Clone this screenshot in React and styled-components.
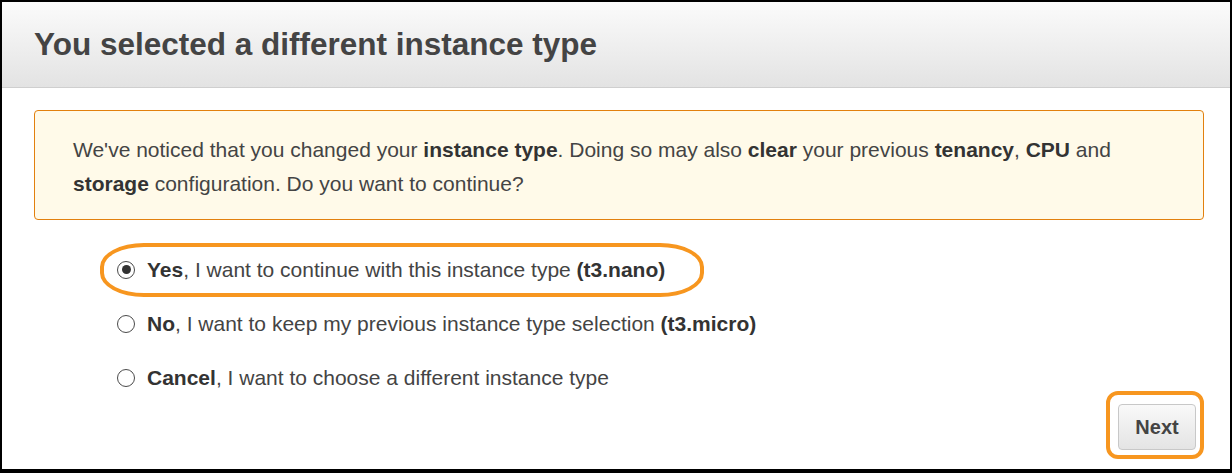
import React from "react";
import styled, { createGlobalStyle } from "styled-components";

const GlobalStyle = createGlobalStyle`
	html, body {
		margin: 0;
		padding: 0;
		background: #000;
	}
	body {
		font-family: "Liberation Sans", Arial, sans-serif;
		color: #444;
	}
`;

const options = [
	{ id: "yes", lead: "Yes", text: ", I want to continue with this instance type ", tail: "(t3.nano)", checked: true },
	{ id: "no", lead: "No", text: ", I want to keep my previous instance type selection ", tail: "(t3.micro)" },
	{ id: "cancel", lead: "Cancel", text: ", I want to choose a different instance type" },
];

function App() {
	return (
		<>
			<GlobalStyle />
			<Frame>
				<Header>
					<Title>You selected a different instance type</Title>
				</Header>
				<Body>
					<Alert>
						We've noticed that you changed your <b>instance type</b>. Doing so may also <b>clear</b> your
						previous <b>tenancy</b>, <b>CPU</b> and <b>storage</b> configuration. Do you want to continue?
					</Alert>
					<Options>
						{options.map((o) => (
							<Option key={o.id} $highlighted={o.checked}>
								<Radio $checked={o.checked} />
								<span>
									<b>{o.lead}</b>
									{o.text}
									{o.tail && <b>{o.tail}</b>}
								</span>
							</Option>
						))}
					</Options>
					<Footer>
						<NextWrap>
							<NextButton>Next</NextButton>
						</NextWrap>
					</Footer>
				</Body>
			</Frame>
		</>
	);
}

export default App;

const Frame = styled.div`
	box-sizing: border-box;
	width: 1232px;
	height: 473px;
	border: 2px solid #000;
	border-bottom-width: 4px;
	background: #fff;
	display: flex;
	flex-direction: column;
	overflow: hidden;
`;

const Header = styled.div`
	height: 85px;
	border-bottom: 1px solid #cfcfcf;
	background: linear-gradient(to bottom, #fbfbfb, #e3e3e3);
	display: flex;
	align-items: center;
	padding-left: 32px;
`;

const Title = styled.h1`
	margin: 0;
	font-size: 31.5px;
	font-weight: bold;
	color: #444;
`;

const Body = styled.div`
	flex: 1;
	padding: 22px 26px 0 32px;
	display: flex;
	flex-direction: column;
`;

const Alert = styled.div`
	box-sizing: border-box;
	height: 110px;
	border: 1px solid #e2800e;
	border-radius: 4px;
	background: #fffae9;
	padding: 22px 30px 0 38px;
	font-size: 21px;
	line-height: 34px;
	color: #444;

	b {
		color: #333;
	}
`;

const Options = styled.div`
	display: flex;
	flex-direction: column;
	padding: 30px 0 0 83px;
	gap: 14px;
`;

const Option = styled.label`
	position: relative;
	align-self: flex-start;
	display: flex;
	align-items: center;
	gap: 12px;
	height: 40px;
	font-size: 21px;
	color: #444;

	b {
		color: #333;
	}

	&:before {
		content: "";
		display: ${(p) => (p.$highlighted ? "block" : "none")};
		position: absolute;
		left: -17px;
		right: -39px;
		top: -7px;
		bottom: -7px;
		border: 4px solid #f7961f;
		border-radius: 44px / 24px;
	}
`;

const Radio = styled.span`
	box-sizing: border-box;
	width: 18px;
	height: 18px;
	margin-top: -1px;
	border-radius: 50%;
	border: 1px solid #4a4a4a;
	background: #fff;
	display: flex;
	align-items: center;
	justify-content: center;

	&:after {
		content: "";
		display: ${(p) => (p.$checked ? "block" : "none")};
		width: 9px;
		height: 9px;
		border-radius: 50%;
		background: #333;
	}
`;

const Footer = styled.div`
	display: flex;
	justify-content: flex-end;
	margin-top: -7px;
`;

const NextWrap = styled.div`
	padding: 9px 4px 5px 8px;
	border: 4px solid #f7961f;
	border-radius: 12px;
`;

const NextButton = styled.button`
	width: 78px;
	height: 46px;
	border: 1px solid #c8c8c8;
	border-radius: 4px;
	background: linear-gradient(to bottom, #f9f9f9, #e4e4e4);
	font-family: "Liberation Sans", Arial, sans-serif;
	font-size: 20px;
	font-weight: bold;
	color: #444;
	cursor: pointer;
`;
